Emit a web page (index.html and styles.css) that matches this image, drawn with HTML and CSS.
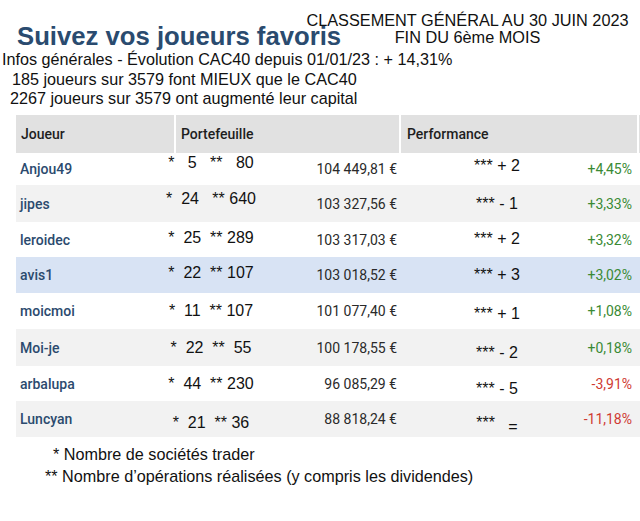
FILE: index.html
```html
<!DOCTYPE html>
<html lang="fr">
<head>
<meta charset="utf-8">
<title>Suivez vos joueurs favoris</title>
<link rel="stylesheet" href="styles.css">
</head>
<body>
<header class="top">
  <h1 class="title">Suivez vos joueurs favoris</h1>
  <div class="classement">
    <div>CLASSEMENT GÉNÉRAL AU 30 JUIN 2023</div>
    <div>FIN DU 6ème MOIS</div>
  </div>
</header>
<section class="infos">
  <p class="info info-1">Infos générales - Évolution CAC40 depuis 01/01/23 : + 14,31%</p>
  <p class="info info-2">185 joueurs sur 3579 font MIEUX que le CAC40</p>
  <p class="info info-3">2267 joueurs sur 3579 ont augmenté leur capital</p>
</section>
<div class="table">
  <div class="thead">
    <div class="th">Joueur</div>
    <div class="th">Portefeuille</div>
    <div class="th th-perf">Performance</div>
    <div class="th"></div>
  </div>
  <div class="row r1">
    <div class="name">Anjou49</div>
    <div class="stars">*   5   **   80</div>
    <div class="value">104 449,81 €</div>
    <div></div>
    <div class="perf">*** + 2</div>
    <div class="pct up">+4,45%</div>
  </div>
  <div class="row r2 alt">
    <div class="name">jipes</div>
    <div class="stars">*  24   ** 640</div>
    <div class="value">103 327,56 €</div>
    <div></div>
    <div class="perf">*** - 1</div>
    <div class="pct up">+3,33%</div>
  </div>
  <div class="row r3">
    <div class="name">leroidec</div>
    <div class="stars">*  25  ** 289</div>
    <div class="value">103 317,03 €</div>
    <div></div>
    <div class="perf">*** + 2</div>
    <div class="pct up">+3,32%</div>
  </div>
  <div class="row r4 sel">
    <div class="name">avis1</div>
    <div class="stars">*  22  ** 107</div>
    <div class="value">103 018,52 €</div>
    <div></div>
    <div class="perf">*** + 3</div>
    <div class="pct up">+3,02%</div>
  </div>
  <div class="row r5">
    <div class="name">moicmoi</div>
    <div class="stars">*  11  ** 107</div>
    <div class="value">101 077,40 €</div>
    <div></div>
    <div class="perf">*** + 1</div>
    <div class="pct up">+1,08%</div>
  </div>
  <div class="row r6 alt">
    <div class="name">Moi-je</div>
    <div class="stars">*  22  **  55</div>
    <div class="value">100 178,55 €</div>
    <div></div>
    <div class="perf">*** - 2</div>
    <div class="pct up">+0,18%</div>
  </div>
  <div class="row r7">
    <div class="name">arbalupa</div>
    <div class="stars">*  44  ** 230</div>
    <div class="value">96 085,29 €</div>
    <div></div>
    <div class="perf">*** - 5</div>
    <div class="pct down">-3,91%</div>
  </div>
  <div class="row r8 alt">
    <div class="name">Luncyan</div>
    <div class="stars">*  21  ** 36</div>
    <div class="value">88 818,24 €</div>
    <div></div>
    <div class="perf">***   <span class="eq">=</span></div>
    <div class="pct down">-11,18%</div>
  </div>
</div>
<footer class="notes">
  <p class="note note-1">* Nombre de sociétés trader</p>
  <p class="note note-2">** Nombre d’opérations réalisées (y compris les dividendes)</p>
</footer>
</body>
</html>
```
FILE: styles.css
```css
* { box-sizing: border-box; }
html, body { margin: 0; padding: 0; background: #fff; }
body {
  font-family: "Liberation Sans", Arial, sans-serif;
  color: #111;
  width: 640px;
  overflow: hidden;
}
p, h1 { margin: 0; }

.top {
  display: grid;
  height: 50px;
}
.title {
  grid-area: 1 / 1;
  align-self: start;
  justify-self: start;
  margin-left: 17px;
  padding-top: 22px;
  font-size: 25.7px;
  line-height: 28px;
  font-weight: bold;
  color: #2a4b6f;
}
.classement {
  grid-area: 1 / 1;
  align-self: start;
  justify-self: start;
  margin-left: 305px;
  width: 325px;
  padding-top: 12px;
  text-align: center;
  font-size: 16.3px;
  line-height: 17px;
  color: #111;
}

.infos { font-size: 16.2px; line-height: 19.5px; color: #111; }
.info-1 { padding-left: 2px; }
.info-2 { padding-left: 12px; }
.info-3 { padding-left: 10px; }

.table {
  margin-top: 6.5px;
  margin-left: 16px;
  width: 624px;
  font-family: Roboto, "Liberation Sans", sans-serif;
}
.thead {
  display: grid;
  grid-template-columns: 158px 223px 236px 1fr;
  column-gap: 2px;
  height: 38px;
  background: #fff;
}
.th {
  background: #e1e1e1;
  font-size: 14px;
  font-weight: 500;
  color: #1e1e1e;
  padding-left: 5px;
  display: flex;
  align-items: center;
}
.th-perf { padding-left: 6px; }

.row {
  display: grid;
  grid-template-columns: 149px 92px 140px 40px 120px 1fr;
  padding-right: 8px;
  background: #fff;
}
.row.alt { background: #f2f2f2; }
.row.sel { background: #d8e3f4; }

.name {
  align-self: center;
  padding-left: 4px;
  font-size: 14px;
  font-weight: 500;
  color: #2b4a6e;
}
.stars, .perf {
  align-self: start;
  font-family: "Liberation Sans", Arial, sans-serif;
  font-size: 16px;
  line-height: 16px;
  color: #111;
  white-space: pre;
  text-align: center;
}
.eq { position: relative; top: 4px; }
.value {
  align-self: center;
  text-align: right;
  font-size: 14px;
  color: #2a2a2a;
}
.pct {
  align-self: center;
  text-align: right;
  font-size: 14px;
}
.pct.up { color: #3a8a34; }
.pct.down { color: #cf3a32; }

.r1 { height: 32px; }
.r2 { height: 37px; }
.r3 { height: 35px; }
.r4 { height: 36px; }
.r5 { height: 36px; }
.r6 { height: 37px; }
.r7 { height: 35px; }
.r8 { height: 36px; }

.r1 .stars { padding-top: 2px; }  .r1 .perf { padding-top: 5px; }
.r2 .stars { padding-top: 6px; }  .r2 .perf { padding-top: 11px; }
.r3 .stars { padding-top: 8px; }  .r3 .perf { padding-top: 9px; }
.r4 .stars { padding-top: 8px; }  .r4 .perf { padding-top: 10px; }
.r5 .stars { padding-top: 10px; } .r5 .perf { padding-top: 13px; }
.r6 .stars { padding-top: 11px; } .r6 .perf { padding-top: 16px; }
.r7 .stars { padding-top: 10px; } .r7 .perf { padding-top: 15px; }
.r8 .stars { padding-top: 14px; } .r8 .perf { padding-top: 14px; }

.notes {
  margin-top: 5.5px;
  font-size: 16.2px;
  line-height: 22px;
  color: #111;
}
.note-1 { padding-left: 53px; }
.note-2 { padding-left: 45px; }
```
